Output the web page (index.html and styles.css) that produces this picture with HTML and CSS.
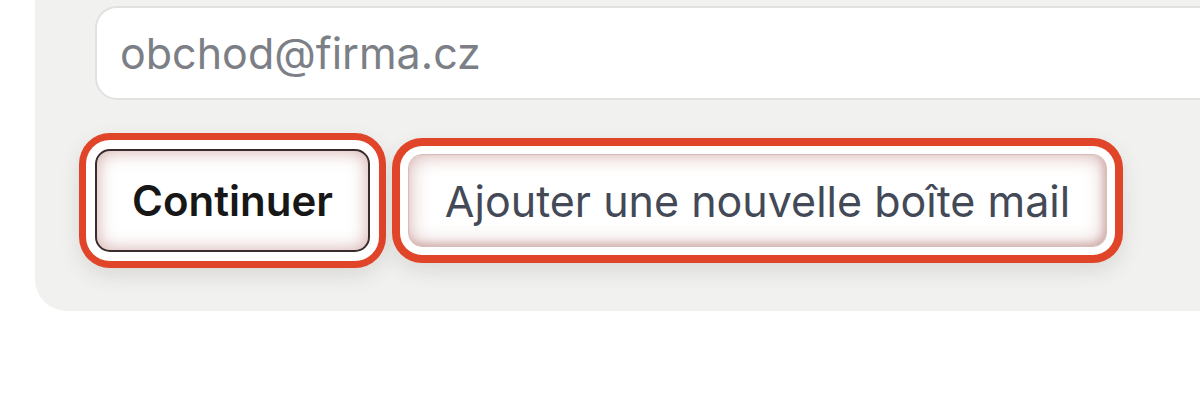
FILE: index.html
```html
<!DOCTYPE html>
<html lang="fr">
<head>
<meta charset="utf-8">
<title>Boîte mail</title>
<link rel="stylesheet" href="styles.css">
</head>
<body>
<div class="panel">
  <input class="email" type="email" placeholder="obchod@firma.cz">
  <div class="actions">
    <button class="btn btn-primary" type="button">Continuer</button>
    <button class="btn btn-secondary" type="button">Ajouter une nouvelle boîte mail</button>
  </div>
</div>
</body>
</html>
```

FILE: styles.css
```css
html, body {
  margin: 0;
  padding: 0;
  background: #ffffff;
  overflow: hidden;
}

body {
  font-family: "Inter", "Liberation Sans", sans-serif;
  width: 1200px;
  height: 399px;
}

.panel {
  margin-left: 35px;
  margin-top: -30px;
  width: 1165px;
  padding: 36px 0 59px 60px;
  background: #f1f1ef;
  border-bottom-left-radius: 32px;
  box-sizing: border-box;
  overflow: hidden;
}

.email {
  display: block;
  width: 1200px;
  height: 94px;
  box-sizing: border-box;
  border: 2px solid #e1e1df;
  border-radius: 22px;
  background: #ffffff;
  padding: 0 0 0 23px;
  font-family: "Inter", "Liberation Sans", sans-serif;
  font-size: 43px;
  color: #222;
  outline: none;
}

.email::placeholder {
  color: #7c7f86;
}

.actions {
  display: flex;
  align-items: center;
  gap: 38px;
  margin-top: 49px;
}

.btn {
  font-family: "Inter", "Liberation Sans", sans-serif;
  background: #ffffff;
  cursor: pointer;
  box-sizing: border-box;
  margin: 0;
}

.btn-primary {
  width: 275px;
  height: 103px;
  border: 2px solid #3a2b2c;
  border-radius: 15px;
  font-size: 42px;
  font-weight: 600;
  color: #171717;
  padding: 0;
  box-shadow:
    inset 0 0 18px rgba(190, 135, 130, 0.7),
    0 0 0 9px #ffffff,
    0 0 0 16px #e0452a,
    0 8px 22px 14px rgba(60, 50, 45, 0.14);
}

.btn-secondary {
  width: 699px;
  height: 93px;
  border: 1px solid #d6bdb9;
  border-radius: 14px;
  font-size: 43px;
  font-weight: 400;
  color: #434956;
  padding: 0;
  box-shadow:
    inset 0 0 20px rgba(190, 135, 130, 0.65),
    inset -3px -3px 6px rgba(180, 135, 130, 0.4),
    0 0 0 8px #ffffff,
    0 0 0 16px #e0452a,
    0 8px 22px 14px rgba(60, 50, 45, 0.14);
}
```
